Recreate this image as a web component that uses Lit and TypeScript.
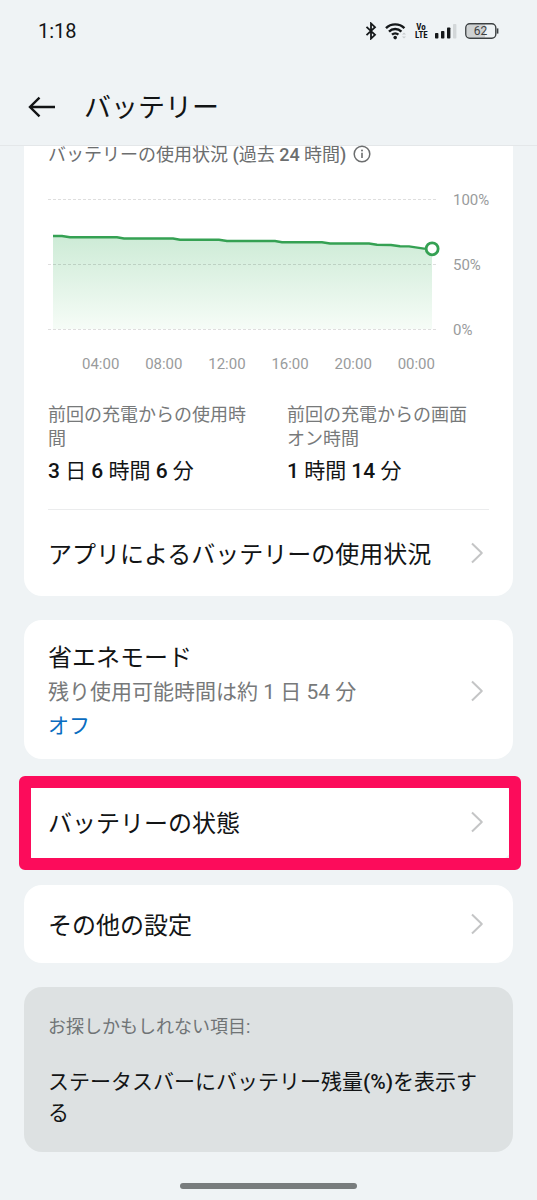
import { LitElement, html, svg, css } from "lit";
import { customElement, property } from "lit/decorators.js";

const chevron = html`<svg class="chevron" width="14" height="22" viewBox="0 0 14 22" aria-hidden="true">
  <path d="M2 1.5 L11.8 11 L2 20.5" fill="none" stroke="#c4c5c6" stroke-width="2" stroke-linejoin="round" />
</svg>`;

@customElement("status-bar")
class StatusBar extends LitElement {
  static styles = css`
    :host {
      display: flex;
      align-items: center;
      justify-content: space-between;
      height: 62px;
      padding: 0 38px;
      box-sizing: border-box;
    }
    .time {
      font-size: 20px;
      line-height: 24px;
    }
    .icons {
      display: flex;
      align-items: center;
      gap: 8px;
    }
    .icons svg {
      display: block;
    }
    .volte {
      width: 12px;
      font-size: 9px;
      line-height: 8px;
      font-weight: 700;
      font-family: "Roboto Condensed", Roboto, sans-serif;
      text-align: center;
    }
    .battery-text {
      font: 12px Roboto, sans-serif;
    }
  `;

  render() {
    return html`
      <span class="time">1:18</span>
      <div class="icons">
        <svg width="12" height="18" viewBox="0 0 12 18" aria-label="Bluetooth">
          <path d="M1.5 4.8 L10 12.8 L6 16.6 V1.4 L10 5.2 L1.5 13.2" fill="none" stroke="#15181a" stroke-width="1.8" />
        </svg>
        <svg width="22" height="18" viewBox="0 0 22 18" aria-label="Wi-Fi">
          <g fill="none" stroke="#15181a" stroke-width="2.4">
            <path d="M1 6.2 A13 13 0 0 1 19.4 6.2" />
            <path d="M4 9.6 A8.8 8.8 0 0 1 16.4 9.6" />
            <path d="M7 12.6 A4.8 4.8 0 0 1 13.4 12.6" />
          </g>
          <circle cx="10.2" cy="15.6" r="1.8" fill="#15181a" />
          <path d="M17 12.6 L19 10.6 L21 12.6 Z M17 14.4 L19 16.4 L21 14.4 Z" fill="#c9cdcf" />
        </svg>
        <div class="volte">Vo<br />LTE</div>
        <svg width="22" height="16" viewBox="0 0 22 16" aria-label="Signal">
          <g fill="#15181a">
            <rect x="0" y="10" width="3.4" height="5.5" rx="0.8" />
            <rect x="6" y="8" width="3.4" height="7.5" rx="0.8" />
            <rect x="12" y="4.5" width="3.4" height="11" rx="0.8" />
          </g>
          <rect x="18" y="1" width="3.4" height="14.5" rx="0.8" fill="#d3d7d9" />
        </svg>
        <svg width="34" height="16" viewBox="0 0 34 16" aria-label="Battery">
          <path d="M5 1.5 H20 V14.5 H5 Q2 14.5 2 11.5 V4.5 Q2 1.5 5 1.5 Z" fill="#cfd2d3" />
          <rect x="0.8" y="0.8" width="30" height="14.4" rx="4" fill="none" stroke="#3c4042" stroke-width="1.4" />
          <path d="M32.6 5.4 V10.6" stroke="#3c4042" stroke-width="1.6" />
          <text class="battery-text" x="15.6" y="12.4" text-anchor="middle" fill="#3c4042">62</text>
        </svg>
      </div>
    `;
  }
}

@customElement("usage-chart")
class UsageChart extends LitElement {
  static styles = css`
    :host {
      display: block;
      color: #999b9c;
      font-size: 15px;
      line-height: 16px;
    }
    .area {
      display: grid;
      grid-template-columns: 1fr 36px;
      column-gap: 15px;
      height: 146px;
    }
    .plot {
      display: block;
      width: 100%;
      height: 146px;
      overflow: visible;
    }
    .levels {
      display: flex;
      flex-direction: column;
      justify-content: space-between;
    }
    .hours {
      display: flex;
      justify-content: space-between;
      margin-top: 18px;
      padding: 0 54px 0 34px;
    }
  `;

  @property({ attribute: false })
  points: [number, number][] = [
    [5, 44], [14, 44], [22, 45.2], [69, 45.2], [76, 46.5], [125, 46.5], [132, 47.8],
    [171, 47.8], [179, 49], [227, 49], [234, 50.2], [274, 50.2], [282, 51.5],
    [321, 51.5], [329, 52.7], [343, 53], [352, 54.2], [361, 54.4], [376, 56.6], [384, 56.6],
  ];

  render() {
    const line = this.points.map((p) => p.join(",")).join(" ");
    return html`
      <div class="area">
        <svg class="plot" aria-label="バッテリー残量">
          <defs>
            <linearGradient id="fade" x1="0" y1="0" x2="0" y2="1">
              <stop offset="0" stop-color="#cdebd6" />
              <stop offset="1" stop-color="#f6fcf7" />
            </linearGradient>
          </defs>
          <svg width="100%" height="146" viewBox="0 0 390 146" preserveAspectRatio="none">
            <polygon points="5,137 ${line} 384,137" fill="url(#fade)" />
          </svg>
          ${[7.5, 72.5, 137.5].map(
            (y) => svg`<line x1="0" x2="100%" y1=${y} y2=${y} stroke="#000" stroke-opacity="0.13" stroke-dasharray="3 2" />`
          )}
          <svg width="100%" height="146" viewBox="0 0 390 146" preserveAspectRatio="none">
            <polyline points=${line} fill="none" stroke="#35a153" stroke-width="2.4" vector-effect="non-scaling-stroke" />
          </svg>
          <circle cx="98.5%" cy="56.8" r="6" fill="#fff" stroke="#35a153" stroke-width="2.8" />
        </svg>
        <div class="levels"><span>100%</span><span>50%</span><span>0%</span></div>
      </div>
      <div class="hours">
        ${["04:00", "08:00", "12:00", "16:00", "20:00", "00:00"].map((t) => html`<span>${t}</span>`)}
      </div>
    `;
  }
}

@customElement("app-root")
class AppRoot extends LitElement {
  static styles = css`
    :host {
      display: flex;
      flex-direction: column;
      min-height: 100vh;
      background: #eff3f5;
      color: #121415;
      font-family: Roboto, "Noto Sans CJK JP", sans-serif;
    }
    button {
      border: 0;
      margin: 0;
      padding: 0;
      background: none;
      color: inherit;
      font: inherit;
      text-align: left;
      cursor: pointer;
    }
    h1, h2, p, dl, dt, dd {
      margin: 0;
      font-weight: 400;
    }
    .top {
      border-bottom: 1px solid #e4e7e9;
    }
    .title-bar {
      display: flex;
      align-items: center;
      gap: 28px;
      height: 83px;
      padding: 0 28px;
    }
    .title-bar svg,
    .info svg {
      display: block;
    }
    h1 {
      font-size: 27px;
      line-height: 36px;
      padding-top: 8px;
    }
    .back {
      padding-top: 6px;
    }
    .content {
      display: flex;
      flex-direction: column;
      gap: 24px;
      padding: 0 24px;
    }
    .card {
      background: #fff;
      border-radius: 18px;
      padding: 0 24px;
    }
    .usage {
      border-radius: 0 0 18px 18px;
    }
    .usage-title {
      display: flex;
      align-items: center;
      gap: 7px;
      color: #6c6e6f;
      font-size: 18px;
      line-height: 18px;
    }
    .info {
      margin-top: -2px;
    }
    .num {
      font-weight: 500;
    }
    usage-chart {
      margin-top: 28px;
    }
    .stats {
      display: grid;
      grid-template-columns: 1fr 1fr;
      column-gap: 37px;
      margin-top: 31px;
    }
    .stats dt {
      color: #77797a;
      font-size: 18px;
      line-height: 24px;
    }
    .stats dd {
      margin-top: 8px;
      font-size: 21px;
      line-height: 24px;
    }
    .keep {
      white-space: nowrap;
    }
    .divider {
      height: 1px;
      margin-top: 26px;
      background: #ebeced;
    }
    .row {
      display: flex;
      align-items: center;
      justify-content: space-between;
      width: 100%;
      height: 78px;
      font-size: 24px;
      line-height: 34px;
    }
    .usage .row {
      height: 86px;
    }
    .row.tall {
      height: auto;
      padding: 18px 0 16px;
    }
    .row span {
      display: block;
    }
    .row > span {
      padding-top: 3px;
    }
    .chevron {
      flex: none;
      margin-right: 5px;
    }
    .row .sub {
      color: #77797a;
      font-size: 21px;
    }
    .row .state {
      color: #0a6cc0;
      font-size: 21px;
    }
    .marked {
      position: relative;
    }
    .marked::after {
      content: "";
      position: absolute;
      inset: -7px -8px -9px -5px;
      border: 12px solid #fc0c5b;
      border-radius: 6px;
      pointer-events: none;
    }
    .suggest {
      background: #dde1e2;
      padding: 28px 24px 23px;
    }
    .suggest h2 {
      color: #707476;
      font-size: 18px;
      line-height: 24px;
    }
    .suggest button {
      display: block;
      margin-top: 28px;
      font-size: 21px;
      line-height: 31px;
    }
    .home {
      width: 33%;
      height: 6px;
      margin: auto auto 11px;
      border-radius: 3px;
      background: #787c7d;
    }
  `;

  render() {
    return html`
      <header class="top">
        <status-bar></status-bar>
        <div class="title-bar">
          <button class="back" aria-label="戻る">
            <svg width="28" height="22" viewBox="0 0 28 22">
              <path d="M27 11 H2 M11.5 1.6 L2 11 L11.5 20.4" fill="none" stroke="#121415" stroke-width="2.4" />
            </svg>
          </button>
          <h1>バッテリー</h1>
        </div>
      </header>
      <main class="content">
        <section class="card usage">
          <h2 class="usage-title">
            <span>バッテリーの使用状況 <span class="num">(</span>過去 <span class="num">24</span> 時間<span class="num">)</span></span>
            <button class="info" aria-label="情報">
              <svg width="18" height="18" viewBox="0 0 18 18">
                <circle cx="9" cy="9" r="7.8" fill="none" stroke="#6c6e6f" stroke-width="1.5" />
                <path d="M9 7.8 V13" stroke="#6c6e6f" stroke-width="1.6" />
                <circle cx="9" cy="5.4" r="1" fill="#6c6e6f" />
              </svg>
            </button>
          </h2>
          <usage-chart></usage-chart>
          <dl class="stats">
            <div>
              <dt>前回の充電からの使用時間</dt>
              <dd><span class="num">3</span> 日 <span class="num">6</span> 時間 <span class="num">6</span> 分</dd>
            </div>
            <div>
              <dt>前回の充電からの画面<span class="keep">オン時間</span></dt>
              <dd><span class="num">1</span> 時間 <span class="num">14</span> 分</dd>
            </div>
          </dl>
          <div class="divider"></div>
          <button class="row"><span>アプリによるバッテリーの使用状況</span>${chevron}</button>
        </section>
        <section class="card">
          <button class="row tall">
            <span>
              <span>省エネモード</span>
              <span class="sub">残り使用可能時間は約 1 日 54 分</span>
              <span class="state">オフ</span>
            </span>
            ${chevron}
          </button>
        </section>
        <section class="card marked">
          <button class="row"><span>バッテリーの状態</span>${chevron}</button>
        </section>
        <section class="card">
          <button class="row"><span>その他の設定</span>${chevron}</button>
        </section>
        <section class="card suggest">
          <h2>お探しかもしれない項目:</h2>
          <button>ステータスバーにバッテリー残量<span class="num">(%)</span>を表示する</button>
        </section>
      </main>
      <div class="home"></div>
    `;
  }
}
